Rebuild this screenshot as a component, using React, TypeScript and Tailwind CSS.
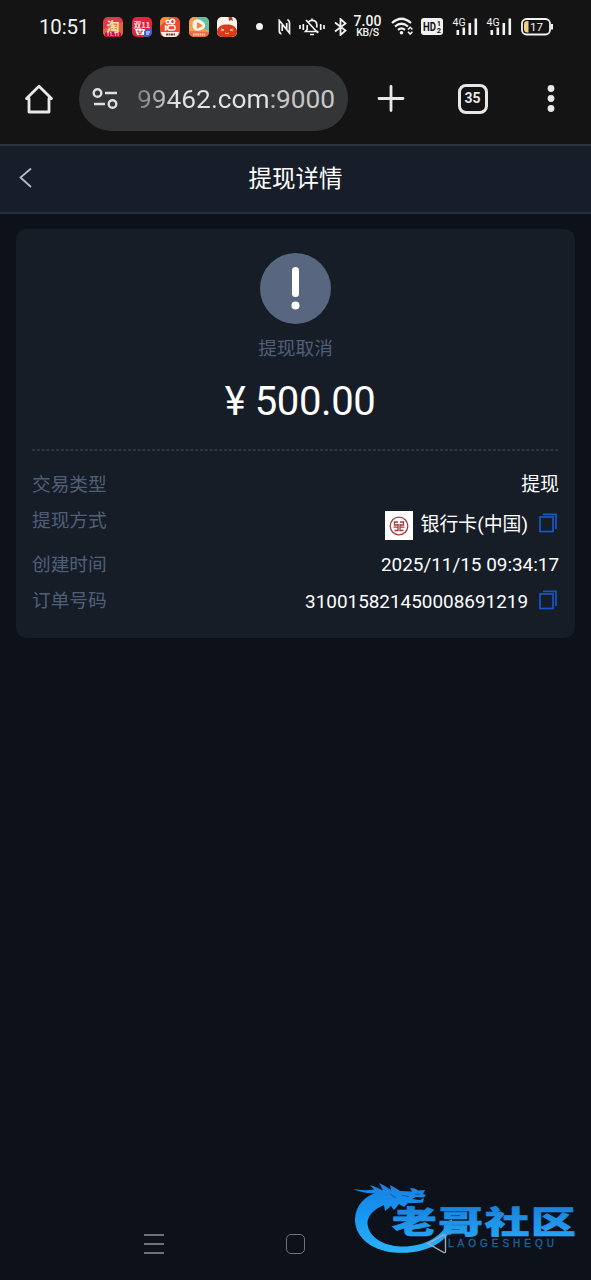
import React from 'react';

type DetailRowProps = {
  label: string;
  className?: string;
  labelClassName?: string;
  children: React.ReactNode;
};

// Small launcher icons shown as notifications
const AppIcons = () => (
  <div className="ml-[14px] flex gap-[8.5px]">
    <svg width="20" height="20" viewBox="0 0 20 20">
      <rect width="20" height="20" rx="5" fill="#dc3a4c" />
      <path d="M0 12L20 5V15a5 5 0 01-5 5H5a5 5 0 01-5-5z" fill="#e5603f" />
      <rect x="2" y="15" width="16" height="5" rx="2" fill="#c40d3d" />
      <text x="10" y="13.500" fontSize="13" fontWeight="700" textAnchor="middle" fill="#ffe9a8" fontFamily="Noto Sans CJK SC">淘</text>
      <text x="10" y="19" fontSize="5" fontWeight="700" textAnchor="middle" fill="#ffd9d9" fontFamily="Roboto">11.11</text>
    </svg>
    <svg width="20" height="20" viewBox="0 0 20 20">
      <rect width="20" height="20" rx="5" fill="#e3263f" />
      <path d="M3 12h10v6H5z" fill="#fff" />
      <path d="M12 14l8-3v4a5 5 0 01-5 5h-3z" fill="#3d63c9" />
      <path d="M5 14h2v3h2v-3h2" stroke="#b32" fill="none" />
      <text x="10" y="10.500" fontSize="7.500" fontWeight="700" textAnchor="middle" fill="#ffe3e3" fontFamily="Noto Sans CJK SC">双11</text>
      <path d="M14 15h4M14 17h3" stroke="#fff" />
    </svg>
    <svg width="20" height="20" viewBox="0 0 20 20">
      <rect width="20" height="20" rx="5" fill="#ee4b2b" />
      <path d="M0 9V5a5 5 0 015-5h6z" fill="#f28a3c" />
      <g fill="none" stroke="#fff" strokeWidth="1.400">
        <circle cx="8" cy="5" r="1.800" />
        <circle cx="12.500" cy="4.500" r="2.200" />
        <rect x="8" y="8.500" width="7" height="4.500" rx="1.500" />
        <path d="M8 10.500L5.500 9v4L8 11.500" />
      </g>
      <path d="M1 15h18l-1 3q-1 2-4 2H6q-3 0-4-2z" fill="#fff2ea" />
      <path d="M6 17.500h9" stroke="#8f3020" strokeWidth="2" strokeDasharray="2 .5" />
    </svg>
    <svg width="20" height="20" viewBox="0 0 20 20">
      <rect width="20" height="20" rx="5" fill="#f0a050" />
      <path d="M8 0h7a5 5 0 015 5v9L8 8z" fill="#64bfa0" />
      <path d="M0 14l20 1a5 5 0 01-5 5H5a5 5 0 01-5-5z" fill="#ee6b48" />
      <path d="M4.500 4Q7 1.500 10 2.500q5 2 6 4.500 1 3-2 5-4 2.500-7.500 1.500Q3.500 12 3.500 8q0-2.500 1-4z" fill="#fff3e6" />
      <path d="M8 6q0-1 1-.6l4 2.500q.8.600 0 1.200L9 11.500q-1 .4-1-.6z" fill="#e9824b" />
      <path d="M4 17.500h12" stroke="#ffd8bc" strokeWidth="2" strokeDasharray="1.500 .7" />
    </svg>
    <svg width="20" height="20" viewBox="0 0 20 20">
      <rect width="20" height="20" rx="5" fill="#fff5ef" />
      <path d="M0 14C1 9 5 7.500 10 7.500S19 9 20 14v1a5 5 0 01-5 5H5a5 5 0 01-5-5z" fill="#d83a1b" />
      <path d="M11.500 0h3.500l1 4-2-1-2 1z" fill="#a6402a" />
      <path d="M4 12l3 1-3 1M16 12l-3 1 3 1M8 16q2 1.500 4 0" fill="none" stroke="#ffc9a0" />
    </svg>
  </div>
);

const MobileSignal = () => (
  <svg width="26" height="20" viewBox="0 0 26 20" fill="#f2f2f2">
    <text x="0.500" y="8.500" fontSize="10.500" fontFamily="Roboto">4G</text>
    <rect x="4.500" y="13" width="2.600" height="5" />
    <rect x="10.500" y="10.500" width="2.600" height="7.500" />
    <rect x="16.500" y="6" width="2.600" height="12" />
    <rect x="22.500" y="1.500" width="2.600" height="16.500" />
  </svg>
);

const StatusBar = () => (
  <div className="flex h-[53px] items-center pl-[39px] text-[#f2f2f2]">
    <span className="w-[50px] whitespace-nowrap text-[20.500px] leading-5 -tracking-[.2px]">10:51</span>
    <AppIcons />
    <span className="ml-[19px] h-[7px] w-[7px] shrink-0 rounded-full bg-[#f2f2f2]" />
    <svg className="ml-[14.500px]" width="13" height="16" viewBox="0 0 13 16" fill="none" stroke="#f2f2f2" strokeWidth="1.700">
      <path d="M3.500 14.800Q1.300 14.500 1.300 12V1.500L11.500 14V4Q11.500 1.500 9.300.800M4.200 6v6M8.700 4v6" />
    </svg>
    <svg className="ml-2" width="26" height="20" viewBox="0 0 26 20" fill="none" stroke="#f2f2f2" strokeWidth="1.700">
      <path d="M1 8v4M4.300 7v6M21.700 7v6M25 8v4M8.200 8v4.500L6.500 14.500h13M9.500 5Q11 3.300 13 3.300q4.500 0 4.800 4.200v3M11 17.500h4M13 1.500v2M7 3L19 16" />
    </svg>
    <svg className="ml-[9px]" width="13" height="18" viewBox="0 0 13 18" fill="none" stroke="#f2f2f2" strokeWidth="1.800">
      <path d="M1 4.500l10.500 8L6.500 17V1l5 4.500L1 13.500" />
    </svg>
    <div className="ml-[7px] flex w-7 flex-col items-center">
      <span className="text-[14px] leading-[11px] font-medium">7.00</span>
      <span className="text-[10.500px] leading-[11px] font-medium -tracking-[.3px]">KB/S</span>
    </div>
    <svg className="ml-[9px]" width="23" height="19" viewBox="0 0 23 19" fill="none" stroke="#f2f2f2" strokeWidth="2.200">
      <path d="M1 6Q10.500-2.500 20 6M4 9.500q6.500-5.500 13 0M7 12.800q3.500-2.800 7 0" />
      <circle cx="10.500" cy="15.700" r="1.800" fill="#f2f2f2" stroke="none" />
      <path d="M17 12.500l2.200-2.200 2.200 2.200M17 14.800l2.200 2.200 2.200-2.200" strokeWidth="1.600" />
    </svg>
    <svg className="ml-[7px]" width="22" height="17" viewBox="0 0 22 17">
      <rect width="22" height="17" rx="3" fill="#f2f2f2" />
      <text x="2" y="12.800" fontSize="12" fill="#141414" fontFamily="Roboto" fontWeight="700" textLength="13" lengthAdjust="spacingAndGlyphs">HD</text>
      <g fill="#141414" fontFamily="Roboto" fontWeight="700" fontSize="7.500">
        <text x="15.800" y="7.800">1</text>
        <text x="15.800" y="14.800">2</text>
      </g>
    </svg>
    <div className="ml-[9px] flex gap-2">
      <MobileSignal />
      <MobileSignal />
    </div>
    <svg className="ml-[9px]" width="33" height="18" viewBox="0 0 33 18">
      <rect x="1" y="1" width="28" height="15.500" rx="4.500" fill="none" stroke="#f2f2f2" strokeWidth="1.800" />
      <path d="M31 6v5.500" stroke="#f2f2f2" strokeWidth="2" />
      <path d="M7.500 3v11.500H6Q3 14.500 3 11V6.500Q3 3 6 3z" fill="#ecd183" />
      <text x="9" y="12.600" fontSize="11.500" fill="#f2f2f2" fontFamily="Roboto">17</text>
    </svg>
  </div>
);

const BrowserBar = () => (
  <div className="flex h-[91px] items-center pl-6">
    <svg width="30" height="32" viewBox="0 0 30 32" fill="none" stroke="#e8e8e8" strokeWidth="2.800" strokeLinejoin="round">
      <path d="M5 15.500H2.500L15 3.200l12.500 12.300H25v13.500H5z" />
    </svg>
    <div className="ml-[25px] flex h-[65px] w-[269px] items-center rounded-full bg-[#343537] pl-[13px]">
      <svg width="27" height="22" viewBox="0 0 27 22" fill="none" stroke="#e0e0e0" strokeWidth="2.400">
        <circle cx="5.500" cy="5" r="3.800" />
        <path d="M13 5h12M2 16h11" />
        <circle cx="20.500" cy="16" r="3.800" />
      </svg>
      <div className="ml-[18px] flex whitespace-nowrap text-[26.300px] leading-8">
        <span className="bg-linear-to-r from-[#77787a] from-0% via-[#e4e4e4] via-30% to-[#e4e4e4] bg-clip-text text-transparent">99462.com</span>
        <span className="text-[#c6c7c8]">:9000</span>
      </div>
    </div>
    <svg className="ml-[28.500px]" width="28" height="28" viewBox="0 0 28 28" stroke="#e8e8e8" strokeWidth="2.800" strokeLinecap="round">
      <path d="M14 1.500v24M2 13.500h24" />
    </svg>
    <div className="ml-[53px] flex h-[30px] w-[30px] items-center justify-center rounded-[8px] border-[3px] border-[#e8e8e8] text-[14px] font-bold text-[#e8e8e8]">
      35
    </div>
    <svg className="ml-[59.500px]" width="8" height="28" viewBox="0 0 8 28" fill="#e8e8e8">
      <circle cx="4" cy="3.500" r="3.400" />
      <circle cx="4" cy="13.500" r="3.400" />
      <circle cx="4" cy="23.500" r="3.400" />
    </svg>
  </div>
);

const CopyIcon = () => (
  <svg className="ml-[11px] mr-[2px] mb-1" width="18" height="20" viewBox="0 0 18 20" fill="none" stroke="#1557c9" strokeWidth="1.700">
    <rect x="1" y="4" width="13" height="14.500" />
    <path d="M4 1.300h13V16" />
  </svg>
);

const BankLogo = () => (
  <svg className="mr-2 -ml-px" width="28" height="29" viewBox="0 0 28 29" fill="none" stroke="#a8383c">
    <rect width="28" height="29" fill="#fff" stroke="none" />
    <circle cx="14" cy="15" r="8.800" strokeWidth="1.300" />
    <path d="M13 11H9.500v3H13v-1M15 11h3.500v3H15v-1M8.500 16.200H13v3.300H9.500M19.500 16.200H15v3.300h3.500M13 16v-2M15 16v-2" strokeWidth="1.300" />
  </svg>
);

const DetailRow = ({ label, className = 'h-9', labelClassName = '', children }: DetailRowProps) => (
  <div className={`flex items-center justify-between ${className}`}>
    <span className={`text-[18.700px] text-[#505f78] ${labelClassName}`}>{label}</span>
    <div className="flex items-center text-[18.900px] text-white">{children}</div>
  </div>
);

const Watermark = () => (
  <svg className="absolute left-[350px] top-[1177px]" width="228" height="82" viewBox="0 0 228 82">
    <defs>
      <linearGradient id="brand" x1="0" y1="0" x2="0" y2="1">
        <stop offset="0" stopColor="#1478d8" />
        <stop offset="1" stopColor="#27a8f5" />
      </linearGradient>
      <linearGradient id="dragon" x1="0" y1="0" x2="0" y2="1">
        <stop offset="0" stopColor="#1b80df" />
        <stop offset=".4" stopColor="#1593f2" />
        <stop offset="1" stopColor="#2bb3fa" />
      </linearGradient>
    </defs>
    {/* dragon head and curved body */}
    <path
      d="M3 12Q14 14 24 12.500L20 8Q27 10 33 13.500L29 6Q36 9 41 13L40 8Q46 11 50 14L62 14.500 60 11Q66 11 68 13.500L75 13 73 17 76 18 74 20.500 66 20 62 22 70 23 74 21 73 25.500 64 26 58 26 54 30 49 27 44 33 41 29 35 34 34 28C24 32 17 39 17.500 47C19 60 33 69 51 69.500C73 70 91 61 99 44L102 42Q103 56 90 65C77 74 60 77 44 75.500C19 73 4 58 5 41C6 29 14 20 25 16Q14 17 3 12z"
      fill="url(#dragon)"
    />
    <path d="M52 18.500l7 1M40 17l6 4M65 17.500l5-.5" stroke="#0e5aa0" fill="none" />
    <text
      transform="translate(42 56) scale(1.440 1)"
      fontSize="31"
      fontWeight="900"
      fontFamily="Noto Sans CJK SC"
      fill="url(#brand)"
      stroke="url(#brand)"
      strokeWidth=".7"
      textLength="127.500"
    >
      老哥社区
    </text>
    <text x="98" y="70" fontSize="10" fontFamily="Liberation Sans" fill="#1c659e" stroke="#1c659e" strokeWidth=".3" textLength="106" lengthAdjust="spacing">LAOGESHEQU</text>
  </svg>
);

const App = () => {
  return (
    <div className="relative flex h-[1280px] w-[591px] flex-col overflow-hidden bg-[#0d121a] font-['Roboto','Noto_Sans_CJK_SC',sans-serif]">
      <div className="bg-[#141414]">
        <StatusBar />
        <BrowserBar />
      </div>

      <header className="grid h-[70px] grid-cols-3 items-center border-y-2 border-t-[#30343a] border-b-[#27313d] bg-[#171e29] pb-[2px]">
        <svg className="ml-[18px]" width="16" height="22" viewBox="0 0 16 22" fill="none" stroke="#b6bcc6" strokeWidth="1.800">
          <path d="M13 1.500L2.500 10.500 13 20" />
        </svg>
        <h1 className="pt-1 text-center text-[23.500px] text-white">提现详情</h1>
      </header>

      <main className="mx-4 mt-[15px] h-[409px] rounded-[10px] bg-[#161d27] px-4 pt-6">
        <div className="flex flex-col items-center">
          <svg width="71" height="71" viewBox="0 0 71 71">
            <circle cx="35.500" cy="35.500" r="35.500" fill="#58677f" />
            <rect x="32" y="14" width="7" height="30" rx="3.500" fill="#fff" />
            <circle cx="35.500" cy="52.500" r="4" fill="#fff" />
          </svg>
          <p className="mt-[11px] text-[18.700px] leading-7 text-[#505f78]">提现取消</p>
          <p className="mt-4 ml-[9px] whitespace-nowrap text-[40px] leading-[46px] -tracking-[.4px] text-white">¥ 500.00</p>
        </div>
        <svg className="mt-6 block w-full" height="2">
          <path d="M0 1H527" stroke="#343e4b" strokeWidth="1.500" strokeDasharray="3 1.800" />
        </svg>
        <div className="mt-4">
          <DetailRow label="交易类型">提现</DetailRow>
          <DetailRow label="提现方式" className="h-11" labelClassName="-mt-2">
            <BankLogo />
            <span>银行卡(中国)</span>
            <CopyIcon />
          </DetailRow>
          <DetailRow label="创建时间">2025/11/15 09:34:17</DetailRow>
          <DetailRow label="订单号码" className="h-[38px]" labelClassName="-mt-[2px]">
            <span>310015821450008691219</span>
            <CopyIcon />
          </DetailRow>
        </div>
      </main>

      <nav className="mt-auto flex h-[72px] items-center pl-36">
        <svg width="20" height="22" viewBox="0 0 20 22" stroke="#6d7279" strokeWidth="1.800">
          <path d="M0 2h20M0 11h20M0 20h20" />
        </svg>
        <span className="ml-[122px] h-5 w-[19px] rounded-[5px] border-[1.500px] border-[#6d7279]" />
      </nav>

      <Watermark />
      <svg className="absolute left-[426px] top-[1233px]" width="22" height="22" viewBox="0 0 22 22" fill="none" stroke="#9fabb8" strokeWidth="1.400">
        <path d="M2 10.500L17.500 2q2-.8 2 1.200v15q0 2-2 1.200z" />
      </svg>
    </div>
  );
};

export default App;
